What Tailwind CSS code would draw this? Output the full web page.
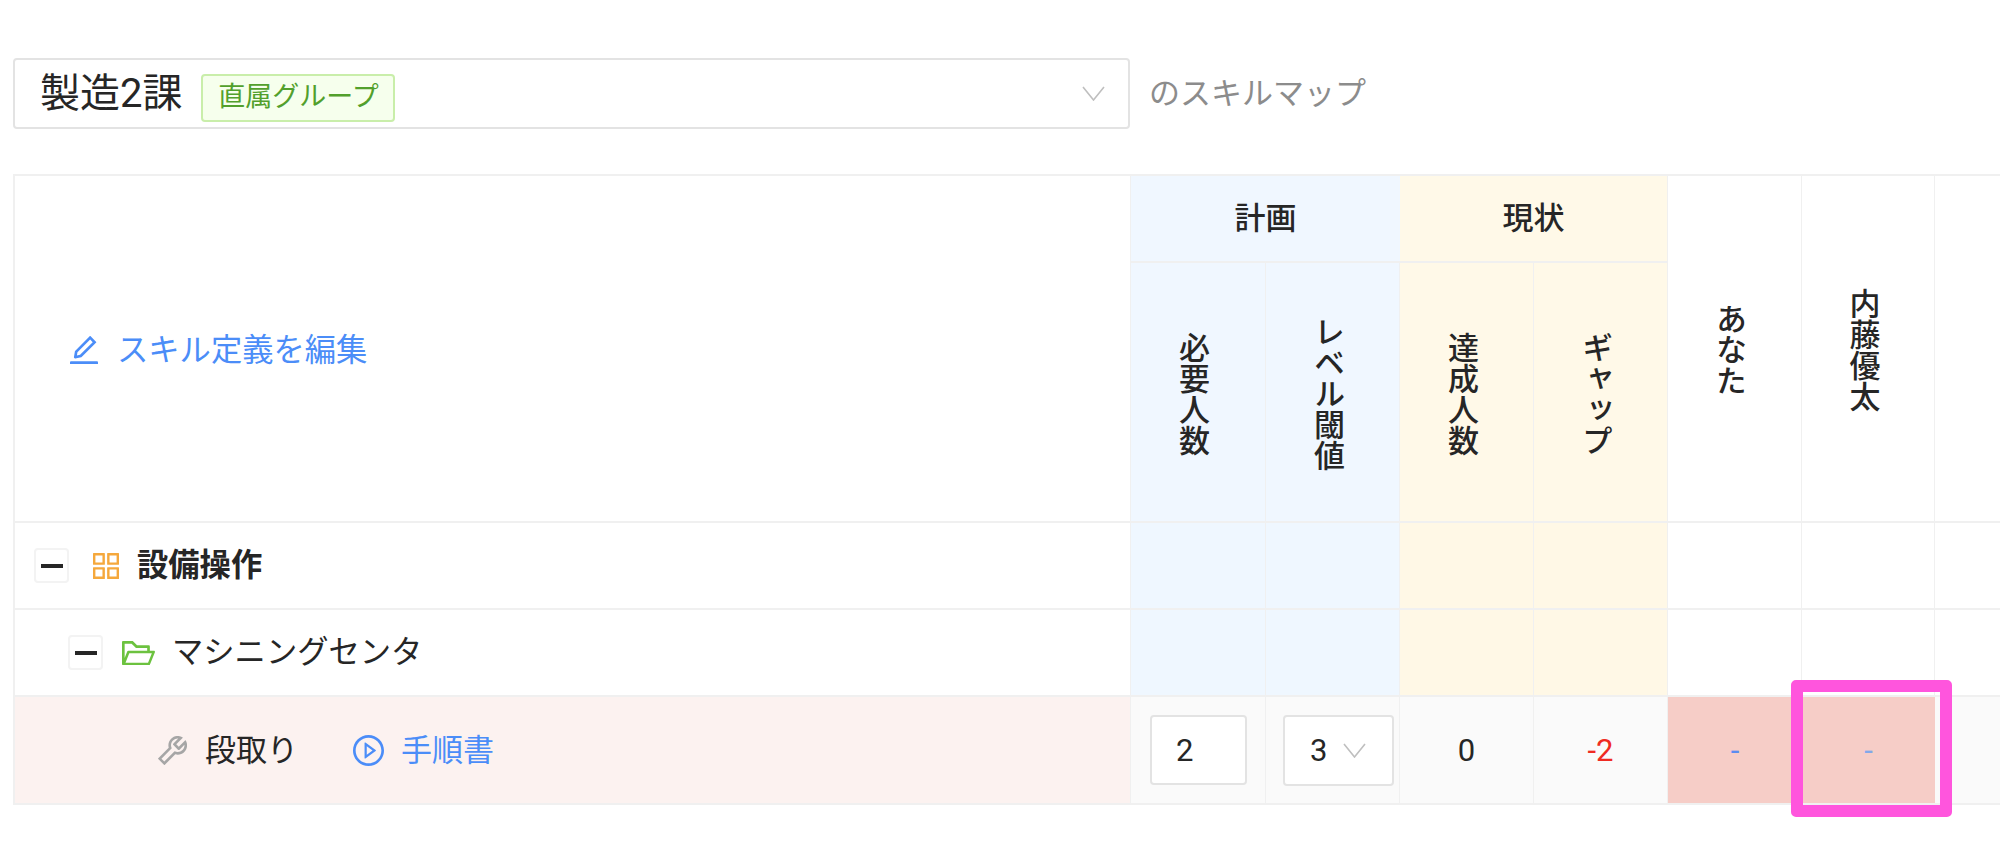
<!doctype html>
<html lang="ja">
<head>
<meta charset="utf-8">
<script src="https://cdn.jsdelivr.net/npm/@tailwindcss/browser@4"></script>
</head>
<body class="m-0 bg-white overflow-hidden font-[family-name:Roboto,'Noto_Sans_CJK_JP',sans-serif] text-[#262626]">
<div class="w-[2000px] h-[853px] overflow-hidden pt-[58px] pl-[13px]">
  <div class="flex items-center gap-[19px] h-[71px]">
    <div class="w-[1117px] h-[71px] border-2 border-[#e3e3e3] rounded-[4px] flex items-center pl-[25px] pr-[23px]">
      <span class="text-[40px] leading-none">製造2課</span>
      <span class="ml-[19px] mt-[8px] h-[48px] w-[194px] shrink-0 flex items-center justify-center border-2 border-[#c9eeaa] bg-[#f6ffed] rounded-[4px] text-[27px] leading-none text-[#52a02c]">直属グループ</span>
      <svg class="ml-auto" width="23" height="15" viewBox="0 0 23 15" fill="none" stroke="#bfbfbf" stroke-width="1.6"><path d="M1 1l10.5 13L22 1"/></svg>
    </div>
    <span class="text-[31px] leading-none text-[#8c8c8c]">のスキルマップ</span>
  </div>
  <table class="mt-[45px] table-fixed border-separate border-spacing-0 w-[2050px] border-l-2 border-t-2 border-[#f0f0f0]">
    <colgroup>
      <col class="w-[1116px]"><col class="w-[135px]"><col class="w-[134px]"><col class="w-[134px]"><col class="w-[134px]"><col class="w-[134px]"><col class="w-[133px]"><col class="w-[134px]"><col>
    </colgroup>
    <thead>
      <tr class="h-[87px]">
        <th rowspan="2" class="border-b-2 border-r border-[#f0f0f0] font-normal text-left align-middle pt-[4px]">
          <a class="flex items-center gap-[19px] pl-[55px] text-[#4b8df8] text-[31.3px] leading-none">
            <svg width="28" height="28" viewBox="112 112 800 800" fill="#4b8df8"><path d="M257.7 752c2 0 4-.2 6-.5L431.9 722c2-.4 3.9-1.3 5.3-2.8l423.9-423.9a9.96 9.96 0 0 0 0-14.1L694.9 114.9c-1.9-1.9-4.4-2.9-7.1-2.9s-5.2 1-7.1 2.9L256.8 538.8c-1.5 1.5-2.4 3.3-2.8 5.3l-29.5 168.2a33.5 33.5 0 0 0 9.4 29.8c6.6 6.4 14.9 9.9 23.8 9.9zm67.4-174.4L687.8 215l73.3 73.3-362.7 362.6-88.9 15.7 15.6-89zM880 836H144c-17.7 0-32 14.3-32 32v36c0 4.4 3.6 8 8 8h784c4.4 0 8-3.6 8-8v-36c0-17.7-14.3-32-32-32z"/></svg>
            スキル定義を編集
          </a>
        </th>
        <th colspan="2" class="bg-[#f0f7ff] border-b-2 border-[#f0f0f0] text-[31px] leading-none font-medium">計画</th>
        <th colspan="2" class="bg-[#fff9e8] border-b-2 border-r border-[#f0f0f0] text-[31px] leading-none font-medium">現状</th>
        <th rowspan="2" class="border-b-2 border-r border-[#f0f0f0] text-[31px] leading-none font-medium pr-[12px] pt-[7px]"><span class="inline-block [writing-mode:vertical-rl]">あなた</span></th>
        <th rowspan="2" class="border-b-2 border-r border-[#f0f0f0] text-[31px] leading-none font-medium pr-[12px] pt-[7px]"><span class="inline-block [writing-mode:vertical-rl]">内藤優太</span></th>
        <th rowspan="2" class="border-b-2 border-[#f0f0f0]"></th>
      </tr>
      <tr class="h-[260px]">
        <th class="bg-[#f0f7ff] border-b-2 border-r border-[#f0f0f0] text-[31px] leading-none font-medium pr-[13px] pt-[8px]"><span class="inline-block [writing-mode:vertical-rl]">必要人数</span></th>
        <th class="bg-[#f0f7ff] border-b-2 border-r border-[#f0f0f0] text-[31px] leading-none font-medium pr-[12px] pt-[8px]"><span class="inline-block [writing-mode:vertical-rl]">レベル閾値</span></th>
        <th class="bg-[#fff9e8] border-b-2 border-r border-[#f0f0f0] text-[31px] leading-none font-medium pr-[12px] pt-[8px]"><span class="inline-block [writing-mode:vertical-rl]">達成人数</span></th>
        <th class="bg-[#fff9e8] border-b-2 border-r border-[#f0f0f0] text-[31px] leading-none font-medium pr-[12px] pt-[8px]"><span class="inline-block [writing-mode:vertical-rl]">ギャップ</span></th>
      </tr>
    </thead>
    <tbody>
      <tr class="h-[87px]">
        <td class="border-b-2 border-r border-[#f0f0f0]">
          <div class="flex items-center pl-[19px]">
            <span class="w-[35px] h-[35px] flex items-center justify-center border-2 border-[#f3f3f3] rounded-[4px] bg-white"><span class="w-[22px] h-[4px] bg-[#262626]"></span></span>
            <svg class="ml-[24px]" width="26" height="26" viewBox="144 144 736 736" fill="#f5a83c"><path d="M464 144H160c-8.8 0-16 7.2-16 16v304c0 8.8 7.2 16 16 16h304c8.8 0 16-7.2 16-16V160c0-8.8-7.2-16-16-16zm-52 268H212V212h200v200zm452-268H560c-8.8 0-16 7.2-16 16v304c0 8.8 7.2 16 16 16h304c8.8 0 16-7.2 16-16V160c0-8.8-7.2-16-16-16zm-52 268H612V212h200v200zM464 544H160c-8.8 0-16 7.2-16 16v304c0 8.8 7.2 16 16 16h304c8.8 0 16-7.2 16-16V560c0-8.8-7.2-16-16-16zm-52 268H212V612h200v200zm452-268H560c-8.8 0-16 7.2-16 16v304c0 8.8 7.2 16 16 16h304c8.8 0 16-7.2 16-16V560c0-8.8-7.2-16-16-16zm-52 268H612V612h200v200z"/></svg>
            <span class="ml-[18px] text-[31.3px] leading-none font-bold">設備操作</span>
          </div>
        </td>
        <td class="bg-[#eff7ff] border-b-2 border-r border-[#f0f0f0]"></td>
        <td class="bg-[#eff7ff] border-b-2 border-r border-[#f0f0f0]"></td>
        <td class="bg-[#fff8e6] border-b-2 border-r border-[#f0f0f0]"></td>
        <td class="bg-[#fff8e6] border-b-2 border-r border-[#f0f0f0]"></td>
        <td class="border-b-2 border-r border-[#f0f0f0]"></td>
        <td class="border-b-2 border-r border-[#f0f0f0]"></td>
        <td class="border-b-2 border-[#f0f0f0]"></td>
      </tr>
      <tr class="h-[87px]">
        <td class="border-b-2 border-r border-[#f0f0f0]">
          <div class="flex items-center pl-[53px]">
            <span class="w-[35px] h-[35px] flex items-center justify-center border-2 border-[#f3f3f3] rounded-[4px] bg-white"><span class="w-[22px] h-[4px] bg-[#262626]"></span></span>
            <svg class="ml-[19px]" width="33" height="24" viewBox="64 184 896 648" fill="#6cc23f" preserveAspectRatio="none"><path d="M928 444H820V330.4c0-17.7-14.3-32-32-32H473L355.7 186.2a8.15 8.15 0 0 0-5.5-2.2H96c-17.7 0-32 14.3-32 32v592c0 17.7 14.3 32 32 32h698c13 0 24.8-7.9 29.7-20l134-332c1.5-3.8 2.3-7.9 2.3-12 0-17.7-14.3-32-32-32zM136 256h188.5l119.6 114.4H748V444H238c-13 0-24.8 7.9-29.7 20L136 643.2V256zm635.3 512H159l103.3-256h612.4L771.3 768z"/></svg>
            <span class="ml-[17px] text-[31.3px] leading-none">マシニングセンタ</span>
          </div>
        </td>
        <td class="bg-[#eff7ff] border-b-2 border-r border-[#f0f0f0]"></td>
        <td class="bg-[#eff7ff] border-b-2 border-r border-[#f0f0f0]"></td>
        <td class="bg-[#fff8e6] border-b-2 border-r border-[#f0f0f0]"></td>
        <td class="bg-[#fff8e6] border-b-2 border-r border-[#f0f0f0]"></td>
        <td class="border-b-2 border-r border-[#f0f0f0]"></td>
        <td class="border-b-2 border-r border-[#f0f0f0]"></td>
        <td class="border-b-2 border-[#f0f0f0]"></td>
      </tr>
      <tr class="h-[108px]">
        <td class="bg-[#fcf2f0] border-b-2 border-r border-[#f0f0f0]">
          <div class="flex items-center pl-[143px]">
            <svg width="29" height="29" viewBox="115 115 795 795" fill="#a6a6a6"><path d="M876.6 239.5c-.5-.9-1.2-1.8-2-2.5-5-5-13.1-5-18.1 0L684.2 409.3l-67.9-67.9L788.7 169c.8-.8 1.4-1.6 2-2.5 3.6-6.1 1.6-13.9-4.5-17.5-98.2-58-226.8-44.7-311.3 39.7-67 67-89.2 162-66.5 247.4l-293 293c-3 3-2.8 7.9.3 11l169.7 169.7c3.1 3.1 8.1 3.3 11 .3l292.9-292.9c85.5 22.8 180.5.7 247.6-66.4 84.4-84.5 97.7-213.1 39.7-311.3zM786 499.8c-58.1 58.1-145.3 69.3-214.6 33.6l-8.8 8.8-.1-.1-274 274.1-79.2-79.2 230.1-230.1s0 .1.1.1l52.8-52.8c-35.7-69.3-24.5-156.5 33.6-214.6a184.2 184.2 0 0 1 144-53.5L537 318.9a32.05 32.05 0 0 0 0 45.3l124.5 124.5a32.05 32.05 0 0 0 45.3 0l132.8-132.8c3.7 51.8-14.4 104.8-53.6 143.9z"/></svg>
            <span class="ml-[18px] text-[31px] leading-none">段取り</span>
            <svg class="ml-[55px]" width="31" height="31" viewBox="64 64 896 896" fill="#4b8df8"><path d="M512 64C264.6 64 64 264.6 64 512s200.6 448 448 448 448-200.6 448-448S759.4 64 512 64zm0 820c-205.4 0-372-166.6-372-372s166.6-372 372-372 372 166.6 372 372-166.6 372-372 372z"/><path d="M719.4 499.1l-296.1-215A15.9 15.9 0 0 0 398 297v430c0 13.1 14.8 20.5 25.3 12.9l296.1-215a15.9 15.9 0 0 0 0-25.8zm-257.6 134V390.9L628.5 512 461.8 633.1z"/></svg>
            <span class="ml-[17px] text-[31px] leading-none text-[#4b8df8]">手順書</span>
          </div>
        </td>
        <td class="bg-[#fafafa] border-b-2 border-r border-[#f0f0f0] pl-[19px]">
          <div class="w-[97px] h-[70px] border-2 border-[#e3e3e3] rounded-[4px] bg-white flex items-center pl-[24px] text-[31px] leading-none">2</div>
        </td>
        <td class="bg-[#fafafa] border-b-2 border-r border-[#f0f0f0] pl-[17px]">
          <div class="w-[111px] h-[71px] border-2 border-[#e3e3e3] rounded-[4px] bg-white flex items-center pl-[25px] gap-[16px] text-[31px] leading-none">
            <span>3</span>
            <svg width="23" height="15" viewBox="0 0 23 15" fill="none" stroke="#bfbfbf" stroke-width="1.6"><path d="M1 1l10.5 13L22 1"/></svg>
          </div>
        </td>
        <td class="bg-[#fafafa] border-b-2 border-r border-[#f0f0f0] text-center text-[31px] leading-none">0</td>
        <td class="bg-[#fafafa] border-b-2 border-r border-[#f0f0f0] text-center text-[31px] leading-none text-[#ef2b22]">-2</td>
        <td class="bg-[#f6cdc7] border-b-2 border-[#f0f0f0] text-center text-[31px] leading-none text-[#5b8cf0]">-</td>
        <td class="relative bg-[#f6cdc7] border-b-2 border-[#f0f0f0] text-center text-[31px] leading-none text-[#82a8ea]">-
          <div class="absolute left-[-11px] top-[-17px] w-[161px] h-[137px] border-[12px] border-[#ff55dd] rounded-[5px]"></div>
        </td>
        <td class="bg-[#fafafa] border-b-2 border-[#f0f0f0]"></td>
      </tr>
    </tbody>
  </table>
</div>
</body>
</html>
